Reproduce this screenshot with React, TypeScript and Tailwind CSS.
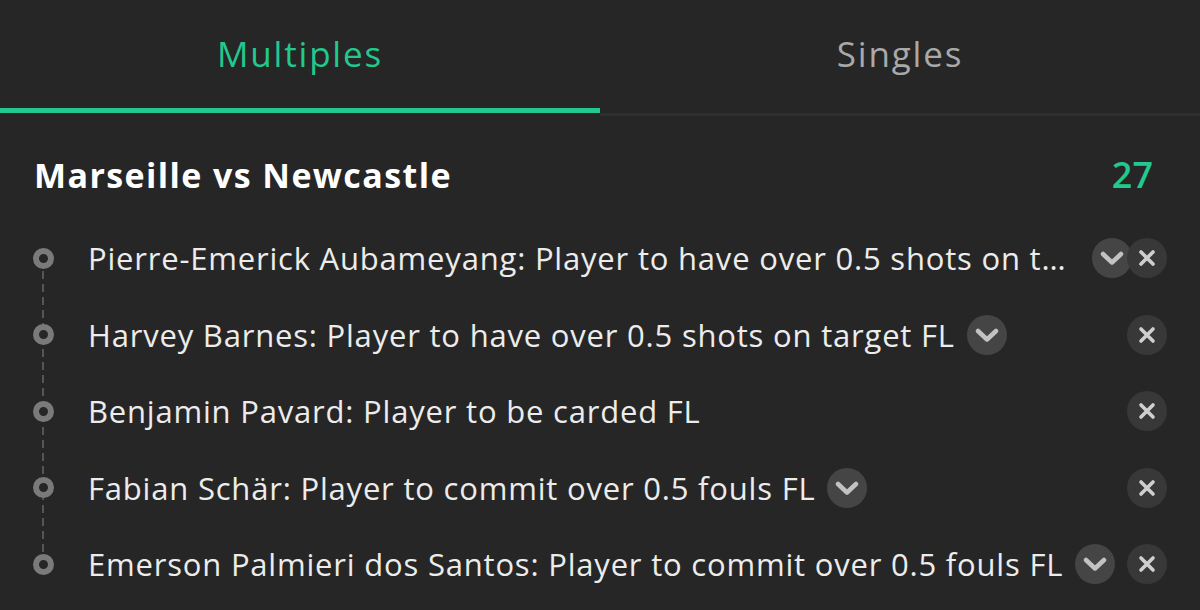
import React from "react";

const GREEN = "#22c88e";

const bets = [
  { text: "Pierre-Emerick Aubameyang: Player to have over 0.5 shots on target FL", more: true },
  { text: "Harvey Barnes: Player to have over 0.5 shots on target FL", more: true },
  { text: "Benjamin Pavard: Player to be carded FL", more: false },
  { text: "Fabian Schär: Player to commit over 0.5 fouls FL", more: true },
  { text: "Emerson Palmieri dos Santos: Player to commit over 0.5 fouls FL", more: true },
];

function Chevron() {
  return (
    <svg width="24" height="24" viewBox="0 0 24 24" fill="none">
      <path d="M3 8l9 8.5L21 8" stroke="#c2c2c2" strokeWidth="4.5" strokeLinecap="round" strokeLinejoin="round" />
    </svg>
  );
}

function Cross() {
  return (
    <svg width="18" height="18" viewBox="0 0 18 18" fill="none">
      <path d="M3 3l12 12M15 3L3 15" stroke="#cfcfcf" strokeWidth="3.6" strokeLinecap="round" />
    </svg>
  );
}

export default function App() {
  return (
    <div
      className="w-[1200px] h-[610px] overflow-hidden bg-[#262626] text-white"
      style={{ fontFamily: "'Open Sans', Lato, sans-serif" }}
    >
      {/* TABS */}
      <div className="flex items-start">
        <div className="flex-1 h-[113px] border-b-[5px] border-[#22c88e] flex items-center justify-center">
          <span className="text-[35px] tracking-[1.8px]" style={{ color: GREEN }}>Multiples</span>
        </div>
        <div className="flex-1 h-[116px] border-b-[3px] border-[#303030] pb-[5px] flex items-center justify-center">
          <span className="text-[35px] tracking-[1.8px] text-[#a9a9a9]">Singles</span>
        </div>
      </div>

      {/* MATCH */}
      <div className="pl-[34px] pr-[47px] mt-[39px] h-[40px] flex items-center justify-between">
        <h2 className="text-[34px] font-bold tracking-[1.4px]">Marseille vs Newcastle</h2>
        <span className="text-[36px] font-semibold" style={{ color: GREEN }}>27</span>
      </div>

      {/* BETS */}
      <div className="relative mt-[25px] px-[33px]">
        <div className="absolute left-[42px] top-[38px] bottom-[38px] w-[2px] bg-[repeating-linear-gradient(to_bottom,#555_0_8px,transparent_8px_13px)]" />

        {bets.map((b, i) => (
          <div key={i} className="relative flex items-center h-[76.5px]">
            <div className="w-[21px] h-[21px] shrink-0 rounded-full border-[6px] border-[#7a7a7a] bg-[#262626] relative z-10" />
            <div className="flex-1 min-w-0 flex items-center ml-[34px] -mr-[5px]">
              <span className="truncate text-[31px] tracking-[0.8px] text-[#ececec]">{b.text}</span>
              {b.more && (
                <button className="shrink-0 ml-[12px] w-[40px] h-[40px] rounded-full bg-[#454545] flex items-center justify-center">
                  <Chevron />
                </button>
              )}
            </div>
            <button className="relative shrink-0 w-[40px] h-[40px] rounded-full bg-[#383838] flex items-center justify-center">
              <Cross />
            </button>
          </div>
        ))}
      </div>
    </div>
  );
}
